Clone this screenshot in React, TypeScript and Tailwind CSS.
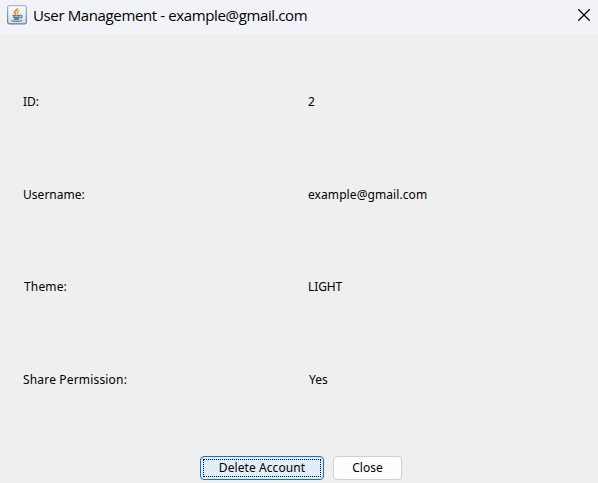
import React from "react";

const rows = [
  { label: "ID:", value: "2", rowClass: "pt-[2px]", labelClass: "", valueClass: "" },
  { label: "Username:", value: "example@gmail.com", rowClass: "pt-[2px]", labelClass: "tracking-[0.03px]", valueClass: "tracking-[0.08px]" },
  { label: "Theme:", value: "LIGHT", rowClass: "", labelClass: "pl-px tracking-[0.15px]", valueClass: "tracking-[-0.1px]" },
  { label: "Share Permission:", value: "Yes", rowClass: "", labelClass: "tracking-[0.17px]", valueClass: "pl-px" },
];

function JavaIcon() {
  return (
    <svg width="20" height="20" viewBox="0 0 20 20" className="block">
      <defs>
        <linearGradient id="face" x1="0" y1="0" x2="0" y2="1">
          <stop offset="0" stopColor="#fdfefe" />
          <stop offset="0.5" stopColor="#edf1f4" />
          <stop offset="1" stopColor="#cfd9e0" />
        </linearGradient>
        <linearGradient id="edge" x1="0" y1="0" x2="0" y2="1">
          <stop offset="0" stopColor="#aab7c0" />
          <stop offset="1" stopColor="#648096" />
        </linearGradient>
      </defs>
      <rect x="0.6" y="0.6" width="18.8" height="18.2" rx="1.8" fill="url(#face)" stroke="url(#edge)" strokeWidth="1.2" />
      <path d="M10.3 3.2c.5 1.6-2.800 2.700-2.800 4.200 0 1 1 1.500 1.600 2.200" fill="none" stroke="#ef8b35" strokeWidth="1.9" />
      <path d="M12.400 5.600c-1.500.7-2.200 1.400-1.700 2.200.4.600.2 1.100-.4 1.600" fill="none" stroke="#ee9a55" strokeWidth="1.4" />
      <path d="M5.500 10.300c1.500.7 6 .7 8 0M6.200 12.200c1.800.8 4.800.8 6.400 0M7 13.900c1.500.6 3.700.6 5 0" fill="none" stroke="#4f7b98" strokeWidth="1.4" />
      <path d="M13.400 10.500c2.500-.6 2.300 1.900-.4 2.500M4.500 15.600c2.600 1.100 8.300 1 10.500-.1" fill="none" stroke="#6389a3" strokeWidth="1.3" />
    </svg>
  );
}

export default function App() {
  return (
    <div className="flex h-[483px] w-[598px] flex-col overflow-hidden bg-[#efefef] font-['Noto_Sans','Liberation_Sans',sans-serif] text-[12px] leading-4 text-black">
      <header className="flex h-[34px] shrink-0 items-start justify-between bg-[#f1f3f9] pl-[7px] pr-[8px]">
        <div className="flex items-start gap-[6px] pt-[5px]">
          <JavaIcon />
          <h1 className="-mt-px whitespace-nowrap font-['Open_Sans','Noto_Sans',sans-serif] text-[15px] leading-[22px] tracking-[-0.37px]">
            User Management - example@gmail.com
          </h1>
        </div>
        <button aria-label="Close window" className="mt-[9px]">
          <svg width="12" height="12" viewBox="0 0 12 12" className="block">
            <path d="M0.300 0.300 11.700 11.700M11.700 0.300 0.300 11.700" stroke="#000" strokeWidth="1.3" />
          </svg>
        </button>
      </header>

      <dl className="mt-[21px] grid h-[371px] shrink-0 grid-rows-4 pl-[23px]">
        {rows.map((row) => (
          <div key={row.label} className={`grid grid-cols-[285px_1fr] items-center ${row.rowClass}`}>
            <dt className={row.labelClass}>{row.label}</dt>
            <dd className={row.valueClass}>{row.value}</dd>
          </div>
        ))}
      </dl>

      <footer className="mt-[30px] flex gap-[9px] pl-[200px]">
        <button className="h-6 w-[124px] rounded-[4px] border border-[#0078d4] bg-[#e0eef9] p-[2px] tracking-[0.08px]">
          <span className="flex h-full items-center justify-center border border-dotted border-black">Delete Account</span>
        </button>
        <button className="h-6 w-[69px] rounded-[4px] border border-[#d0d0d0] bg-[#fdfdfd]">Close</button>
      </footer>
    </div>
  );
}
